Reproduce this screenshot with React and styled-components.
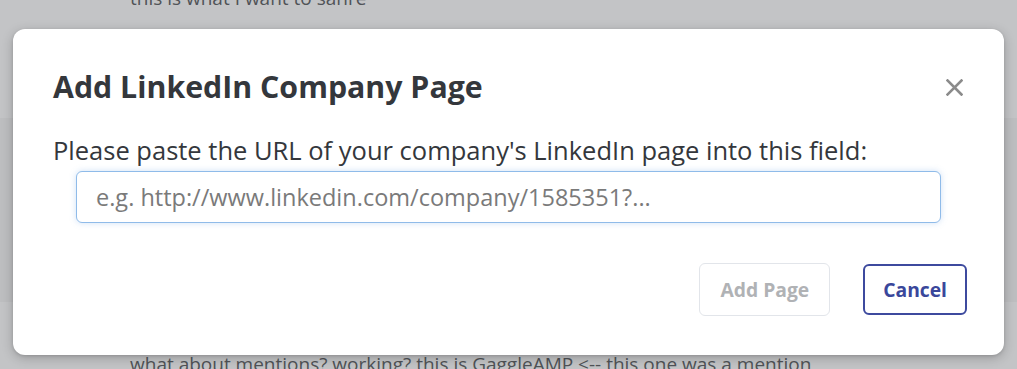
import React, { useState } from 'react';
import styled, { createGlobalStyle } from 'styled-components';

const GlobalStyle = createGlobalStyle`
    html, body {
        margin: 0;
        padding: 0;
        height: 100%;
        background: #c3c4c6;
        font-family: "Open Sans", "Liberation Sans", sans-serif;
        overflow: hidden;
    }
    * { box-sizing: border-box; }
`;

const posts = [
    { id: 1, text: 'this is what I want to sahre', tone: 'light', height: 118 },
    { id: 2, text: '', tone: 'dark', height: 184 },
    { id: 3, text: 'what about mentions? working? this is GaggleAMP <-- this one was a mention', tone: 'light', height: 80 },
];

const CloseIcon = () => (
    <svg width="17" height="17" viewBox="0 0 17 17" fill="none">
        <path d="M1.5 1.5L15.5 15.5M15.5 1.5L1.5 15.5" stroke="#8b8b8b" strokeWidth="2.6" strokeLinecap="square" />
    </svg>
);

const App = () => {
    const [url, setUrl] = useState('');

    return (<Page>
        <GlobalStyle />
        <Feed>
            {
                posts.map(post => {
                    return <FeedRow key={post.id} tone={post.tone} rowHeight={post.height}>
                        {post.text && <PostText first={post.id === 1}>{post.text}</PostText>}
                    </FeedRow>
                })
            }
        </Feed>

        <Modal role="dialog">
            <ModalHeader>
                <Title>Add LinkedIn Company Page</Title>
                <CloseButton aria-label="Close"><CloseIcon /></CloseButton>
            </ModalHeader>
            <Label htmlFor="li-url">Please paste the URL of your company's LinkedIn page into this field:</Label>
            <UrlInput
                id="li-url"
                autoFocus
                value={url}
                onChange={e => setUrl(e.target.value)}
                placeholder="e.g. http://www.linkedin.com/company/1585351?..."
            />
            <Actions>
                <Button disabled={!url}>Add Page</Button>
                <Button variant="outline">Cancel</Button>
            </Actions>
        </Modal>
    </Page>);
}

export default App;

const Page = styled.div`
    position: relative;
    width: 100vw;
    height: 100vh;
    overflow: hidden;
`

const Feed = styled.div`
    display: flex;
    flex-direction: column;
`

const FeedRow = styled.div`
    height: ${props => props.rowHeight}px;
    background: ${props => props.tone === 'dark' ? '#bdbec0' : '#c3c4c6'};
    padding-left: 130px;
    display: flex;
    flex-direction: column;
`

const PostText = styled.div`
    font-size: 19px;
    line-height: 26px;
    color: #505357;
    white-space: nowrap;
    margin-top: ${props => props.first ? '-15px' : '49px'};
`

const Modal = styled.div`
    position: absolute;
    left: 13px;
    top: 29px;
    width: 991px;
    height: 326px;
    background: #ffffff;
    border-radius: 12px;
    box-shadow: 0 3px 12px rgba(0, 0, 0, 0.22), 0 1px 3px rgba(0, 0, 0, 0.12);
    padding: 38px 40px 39px 40px;
    display: flex;
    flex-direction: column;
`

const ModalHeader = styled.div`
    display: flex;
    align-items: center;
    justify-content: space-between;
    height: 40px;
`

const Title = styled.h2`
    margin: 0;
    font-size: 30.3px;
    line-height: 40px;
    font-weight: 700;
    color: #34373c;
`

const CloseButton = styled.button`
    border: none;
    background: none;
    padding: 0;
    margin: 0 1px 0 0;
    display: flex;
    cursor: pointer;
`

const Label = styled.label`
    margin-top: 26px;
    font-size: 25.5px;
    line-height: 34px;
    color: #34373c;
`

const UrlInput = styled.input`
    margin: 4px 23px 0 23px;
    height: 52px;
    flex-shrink: 0;
    border: 1px solid #8fbbe9;
    border-radius: 6px;
    box-shadow: 0 0 6px rgba(120, 170, 230, 0.35);
    padding: 0 19px;
    font-family: inherit;
    font-size: 23.5px;
    color: #333;
    outline: none;
    caret-color: #333;

    &::placeholder {
        color: #7a7a7a;
    }
`

const Actions = styled.div`
    display: flex;
    justify-content: flex-end;
    align-items: center;
    gap: 33px;
    margin-top: 40px;
    margin-right: -3px;
`

const Button = styled.button`
    font-family: inherit;
    font-size: 19.3px;
    font-weight: 700;
    border-radius: 6px;
    background: #fff;
    cursor: pointer;
    height: ${props => props.variant === 'outline' ? '51px' : '53px'};
    padding: ${props => props.variant === 'outline' ? '0 18px' : '0 20px'};
    border: ${props => props.variant === 'outline' ? '2px solid #3d4a9e' : '1px solid #e2e5ea'};
    color: ${props => props.variant === 'outline' ? '#3a479b' : '#b0b2b5'};

    &:disabled {
        cursor: default;
    }
`
